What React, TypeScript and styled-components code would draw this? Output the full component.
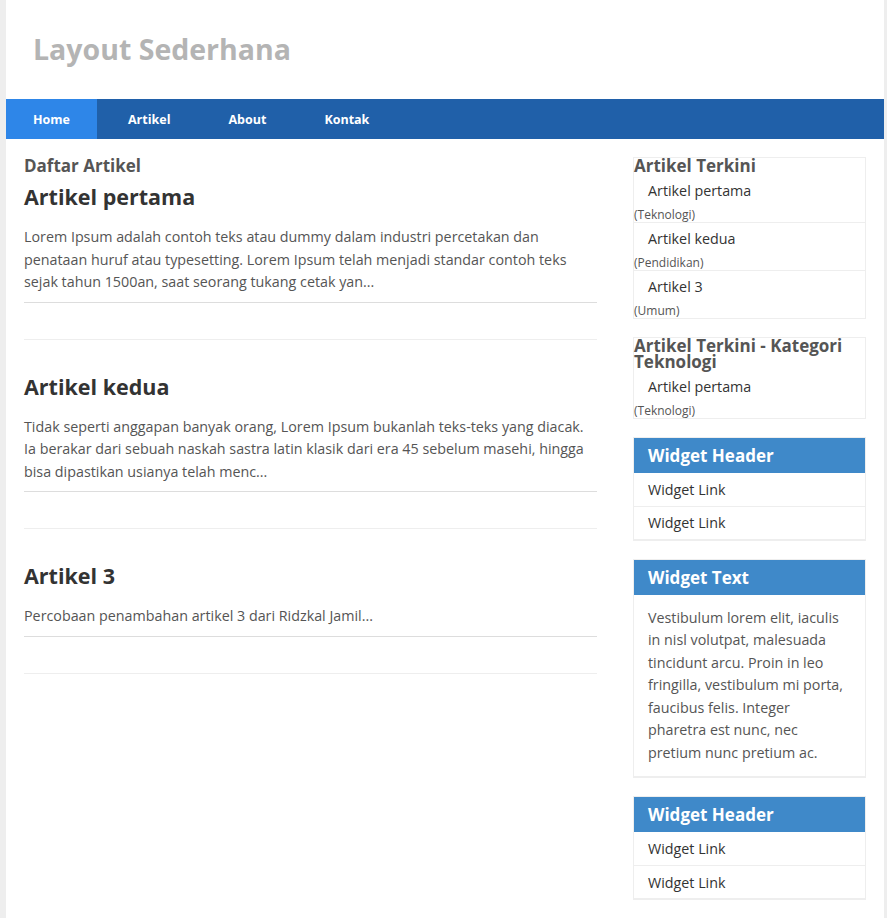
import React from "react";
import styled, { createGlobalStyle } from "styled-components";

const Global = createGlobalStyle`
  html, body { margin: 0; padding: 0; }
  body {
    background: #eeeeee;
    font-family: "Open Sans", "Liberation Sans", sans-serif;
  }
  * { box-sizing: border-box; }
`;

const Wrapper = styled.div`
  margin: 0 3px 0 6px;
  background: #fff;
  min-height: 918px;
`;

const Header = styled.header`
  height: 99px;
  display: flex;
  align-items: center;
  padding: 0 27px 1px;
`;

const SiteTitle = styled.h1`
  margin: 0;
  font-size: 28.5px;
  font-weight: 700;
  color: #b4b4b4;
`;

const Nav = styled.nav`
  height: 40px;
  background: #2060a9;
  display: flex;
  gap: 4px;
`;

const NavItem = styled.a<{ $active?: boolean }>`
  display: flex;
  align-items: center;
  padding: 0 27px;
  background: ${(p) => (p.$active ? "#2e86e8" : "transparent")};
  color: #fff;
  font-size: 12.5px;
  font-weight: 700;
  text-decoration: none;
`;

const Body = styled.div`
  display: flex;
  gap: 36px;
  padding: 18px 18px 0;
`;

const Main = styled.main`
  width: 573px;
  flex: none;
`;

const SectionTitle = styled.h3`
  margin: 0;
  font-size: 17px;
  line-height: 18px;
  font-weight: 700;
  color: #555;
`;

const Article = styled.article`
  & + & { margin-top: 32px; }
`;

const ArticleTitle = styled.h2<{ $first?: boolean }>`
  margin: ${(p) => (p.$first ? "7px" : "0")} 0 14px;
  font-size: 21.5px;
  line-height: 30px;
  font-weight: 700;
  color: #333;
`;

const Excerpt = styled.p`
  margin: 0;
  font-size: 14.3px;
  line-height: 22.5px;
  color: #555;
  padding-bottom: 8px;
  border-bottom: 1px solid #ddd;
`;

const Spacer = styled.div`
  height: 37px;
  border-bottom: 1px solid #eee;
`;

const Sidebar = styled.aside`
  width: 233px;
  flex: none;
  display: flex;
  flex-direction: column;
  gap: 18px;
`;

const PlainBox = styled.div`
  border: 1px solid #eee;
`;

const BoxTitle = styled.h3`
  margin: 0;
  font-size: 17px;
  line-height: 16.5px;
  font-weight: 700;
  color: #555;
`;

const RecentItem = styled.div`
  & + & { border-top: 1px solid #eee; }
`;

const RecentLink = styled.a`
  display: block;
  padding: 6.5px 0 6.5px 14px;
  font-size: 14.3px;
  line-height: 20px;
  color: #333;
  text-decoration: none;
`;

const Category = styled.small`
  display: block;
  font-size: 12px;
  line-height: 14px;
  color: #555;
`;

const Widget = styled.div<{ $placeholder?: boolean }>`
  border: 1px solid #eee;
  border-bottom-width: 2px;
  min-height: ${(p) => (p.$placeholder ? "40px" : "0")};
`;

const WidgetHead = styled.div`
  height: 35px;
  background: #3f89c9;
  color: #fff;
  font-size: 17px;
  font-weight: 700;
  display: flex;
  align-items: center;
  padding: 0 14px;
`;

const WidgetLink = styled.a`
  display: flex;
  align-items: center;
  height: 33px;
  padding: 0 14px;
  font-size: 14.3px;
  color: #333;
  text-decoration: none;
  & + & { border-top: 1px solid #eee; }
`;

const WidgetText = styled.p`
  margin: 0;
  padding: 12px 20px 12px 14px;
  font-size: 14.3px;
  line-height: 22.5px;
  color: #555;
`;

const articles = [
  {
    title: "Artikel pertama",
    text: "Lorem Ipsum adalah contoh teks atau dummy dalam industri percetakan dan penataan huruf atau typesetting. Lorem Ipsum telah menjadi standar contoh teks sejak tahun 1500an, saat seorang tukang cetak yan...",
  },
  {
    title: "Artikel kedua",
    text: "Tidak seperti anggapan banyak orang, Lorem Ipsum bukanlah teks-teks yang diacak. Ia berakar dari sebuah naskah sastra latin klasik dari era 45 sebelum masehi, hingga bisa dipastikan usianya telah menc...",
  },
  {
    title: "Artikel 3",
    text: "Percobaan penambahan artikel 3 dari Ridzkal Jamil...",
  },
];

const recent = [
  { title: "Artikel pertama", cat: "Teknologi" },
  { title: "Artikel kedua", cat: "Pendidikan" },
  { title: "Artikel 3", cat: "Umum" },
];

export default function App() {
  return (
    <>
      <Global />
      <Wrapper>
        <Header>
          <SiteTitle>Layout Sederhana</SiteTitle>
        </Header>
        <Nav>
          <NavItem href="#" $active>Home</NavItem>
          <NavItem href="#">Artikel</NavItem>
          <NavItem href="#">About</NavItem>
          <NavItem href="#">Kontak</NavItem>
        </Nav>
        <Body>
          <Main>
            <SectionTitle>Daftar Artikel</SectionTitle>
            {articles.map((a, i) => (
              <Article key={a.title}>
                <ArticleTitle $first={i === 0}>{a.title}</ArticleTitle>
                <Excerpt>{a.text}</Excerpt>
                <Spacer />
              </Article>
            ))}
          </Main>
          <Sidebar>
            <PlainBox>
              <BoxTitle>Artikel Terkini</BoxTitle>
              {recent.map((r) => (
                <RecentItem key={r.title}>
                  <RecentLink href="#">{r.title}</RecentLink>
                  <Category>({r.cat})</Category>
                </RecentItem>
              ))}
            </PlainBox>
            <PlainBox>
              <BoxTitle>Artikel Terkini - Kategori Teknologi</BoxTitle>
              <RecentItem>
                <RecentLink href="#">Artikel pertama</RecentLink>
                <Category>(Teknologi)</Category>
              </RecentItem>
            </PlainBox>
            <Widget>
              <WidgetHead>Widget Header</WidgetHead>
              <WidgetLink href="#">Widget Link</WidgetLink>
              <WidgetLink href="#">Widget Link</WidgetLink>
            </Widget>
            <Widget>
              <WidgetHead>Widget Text</WidgetHead>
              <WidgetText>
                Vestibulum lorem elit, iaculis in nisl volutpat, malesuada tincidunt arcu. Proin in leo fringilla, vestibulum mi porta, faucibus felis. Integer pharetra est nunc, nec pretium nunc pretium ac.
              </WidgetText>
            </Widget>
            <Widget>
              <WidgetHead>Widget Header</WidgetHead>
              <WidgetLink href="#">Widget Link</WidgetLink>
              <WidgetLink href="#">Widget Link</WidgetLink>
            </Widget>
            <Widget $placeholder />
          </Sidebar>
        </Body>
      </Wrapper>
    </>
  );
}
